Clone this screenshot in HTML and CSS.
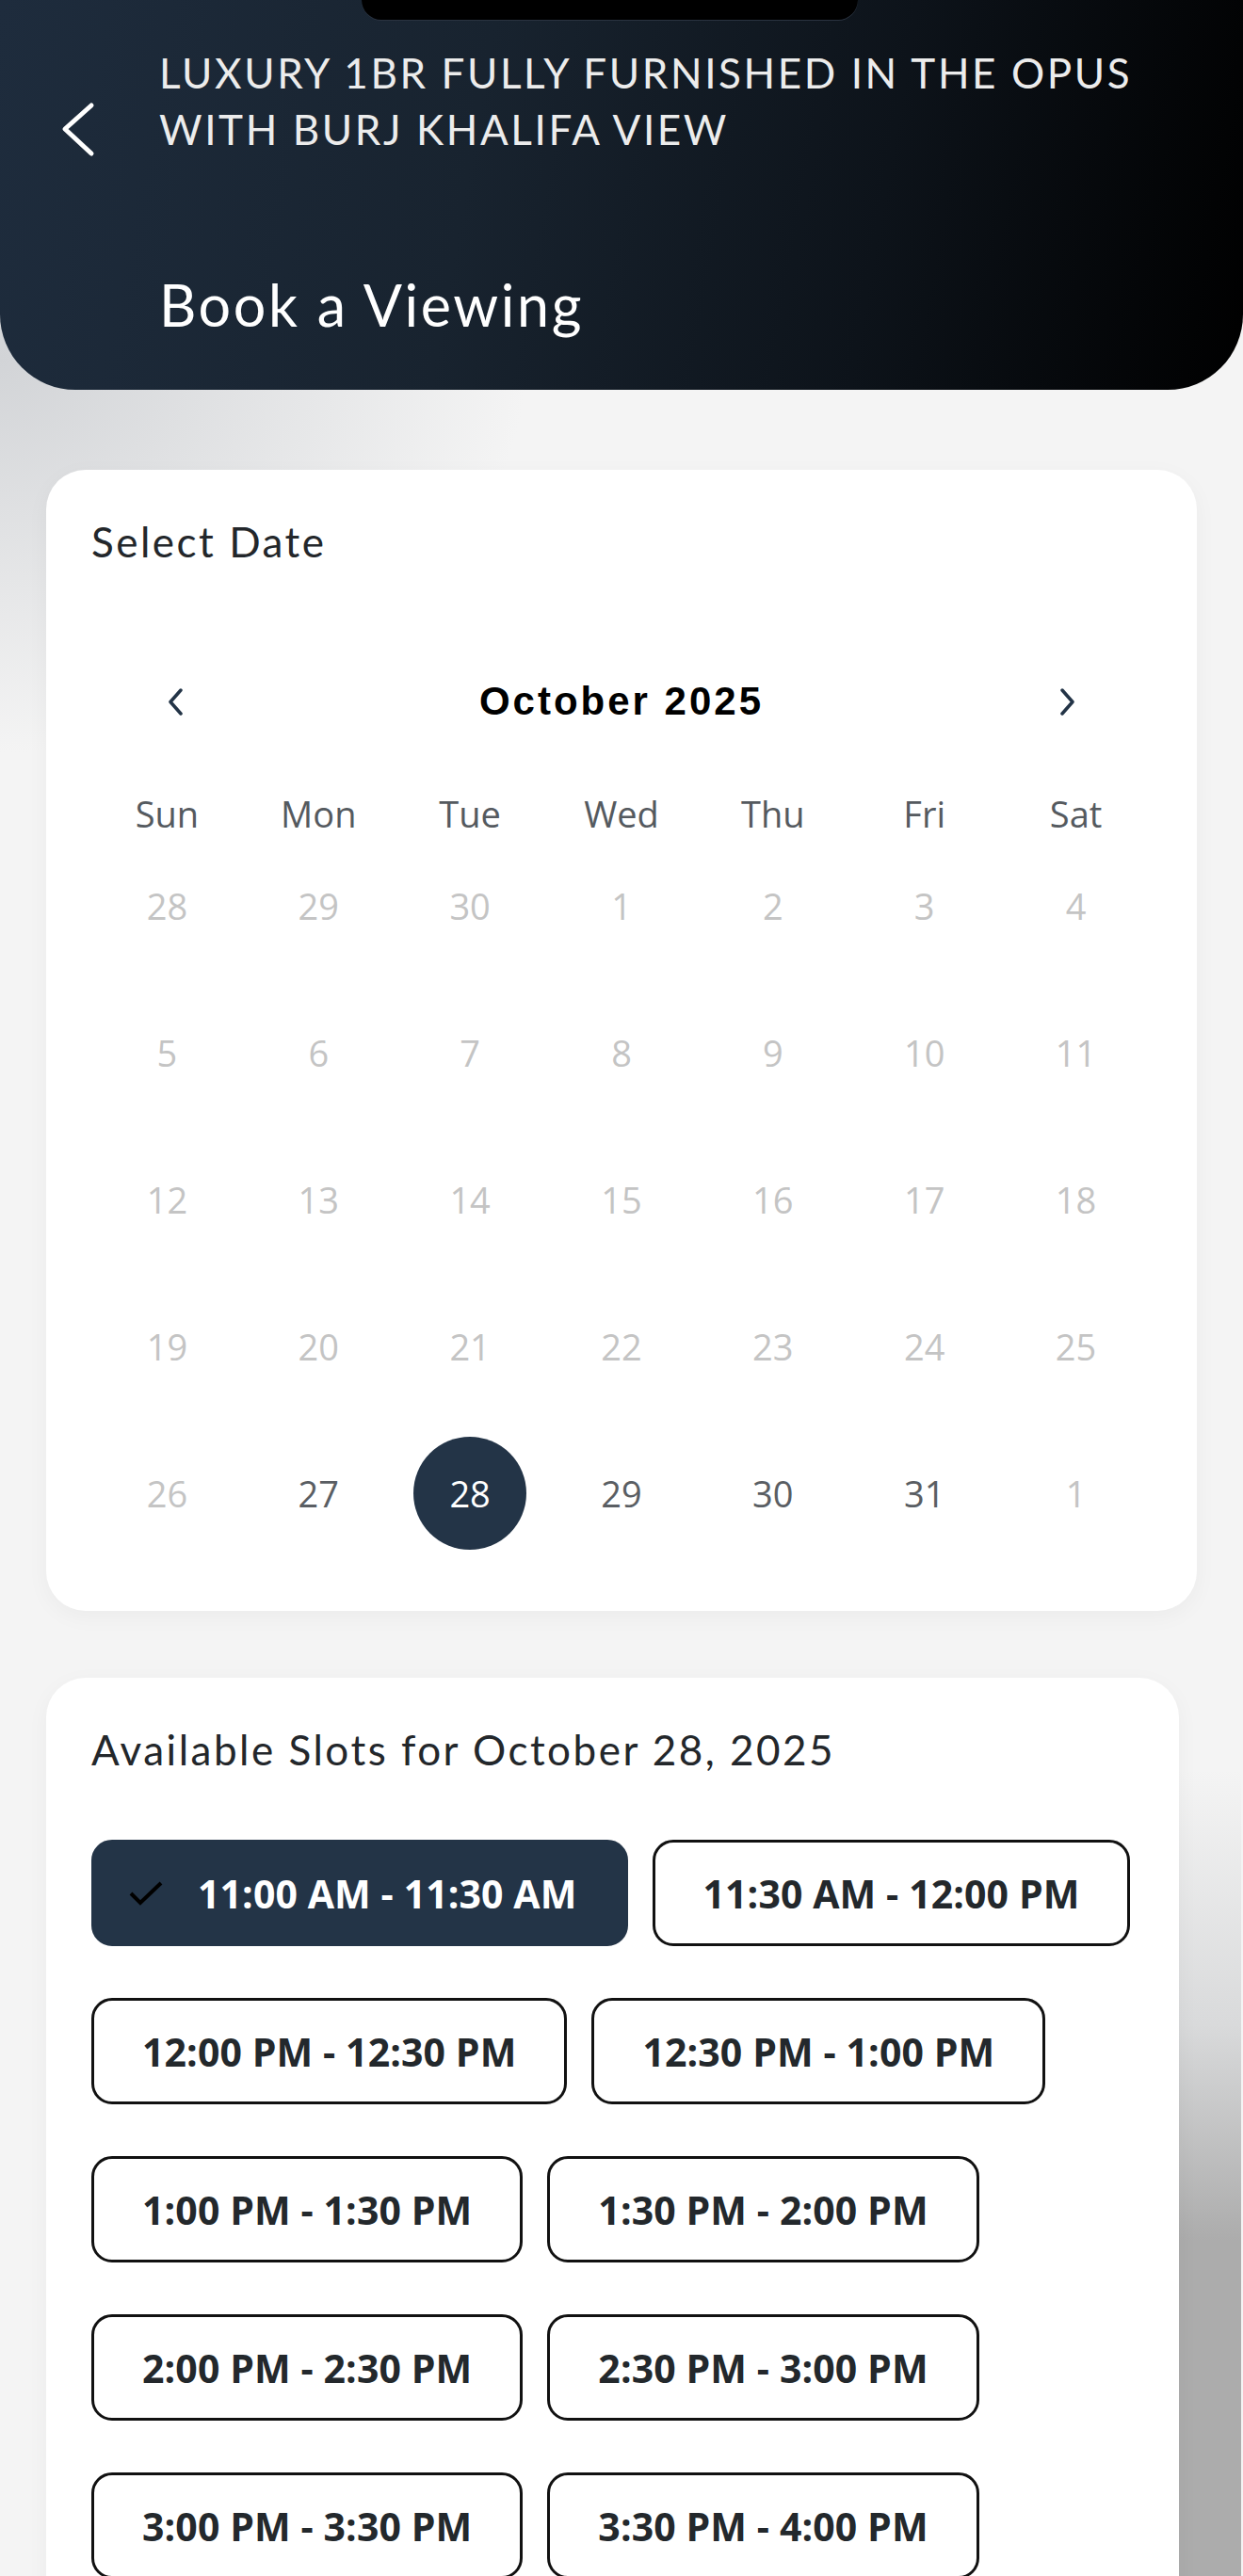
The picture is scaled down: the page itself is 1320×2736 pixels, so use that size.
FILE: index.html
```html
<!DOCTYPE html>
<html>
<head>
    <title>Book a Viewing</title>
    <link rel="stylesheet" href="styles.css">
</head>
<body>

<div class="notch"></div>

<div class="header">
  <div class="header-row">
    <svg class="back" width="40" height="60" viewBox="0 0 40 60">
      <path d="M34 5 L6 30 L34 56" fill="none" stroke="#ffffff" stroke-width="5" stroke-linecap="round" stroke-linejoin="round"/>
    </svg>
    <div class="listing-title">LUXURY 1BR FULLY FURNISHED IN THE OPUS<br>WITH BURJ KHALIFA VIEW</div>
  </div>
  <h1 class="page-title">Book a Viewing</h1>
</div>

<div class="card calendar-card">
  <div class="card-title">Select Date</div>

  <div class="month-row">
    <span class="nav">
      <svg width="18" height="29" viewBox="0 0 18 29"><path d="M15 2 L4 14.5 L15 27" fill="none" stroke="#233447" stroke-width="3.5" stroke-linecap="round" stroke-linejoin="round"/></svg>
    </span>
    <span class="month">October 2025</span>
    <span class="nav">
      <svg width="18" height="29" viewBox="0 0 18 29"><path d="M3 2 L14 14.5 L3 27" fill="none" stroke="#233447" stroke-width="3.5" stroke-linecap="round" stroke-linejoin="round"/></svg>
    </span>
  </div>

  <div class="weekdays">
    <span>Sun</span><span>Mon</span><span>Tue</span><span>Wed</span><span>Thu</span><span>Fri</span><span>Sat</span>
  </div>

  <div class="days">
    <span class="off">28</span><span class="off">29</span><span class="off">30</span><span class="off">1</span><span class="off">2</span><span class="off">3</span><span class="off">4</span>
    <span class="off">5</span><span class="off">6</span><span class="off">7</span><span class="off">8</span><span class="off">9</span><span class="off">10</span><span class="off">11</span>
    <span class="off">12</span><span class="off">13</span><span class="off">14</span><span class="off">15</span><span class="off">16</span><span class="off">17</span><span class="off">18</span>
    <span class="off">19</span><span class="off">20</span><span class="off">21</span><span class="off">22</span><span class="off">23</span><span class="off">24</span><span class="off">25</span>
    <span class="off">26</span><span>27</span><span class="selected"><b>28</b></span><span>29</span><span>30</span><span>31</span><span class="off">1</span>
  </div>
</div>

<div class="card slots-card">
  <div class="card-title">Available Slots for October 28, 2025</div>

  <div class="slots">
    <div class="slot active">
      <svg class="tick" width="36" height="26" viewBox="0 0 36 26"><path d="M2 13 L12 23 L34 2" fill="none" stroke="#000000" stroke-width="4"/></svg>
      11:00 AM - 11:30 AM
    </div>
    <div class="slot">11:30 AM - 12:00 PM</div>
    <div class="slot">12:00 PM - 12:30 PM</div>
    <div class="slot">12:30 PM - 1:00 PM</div>
    <div class="slot">1:00 PM - 1:30 PM</div>
    <div class="slot">1:30 PM - 2:00 PM</div>
    <div class="slot">2:00 PM - 2:30 PM</div>
    <div class="slot">2:30 PM - 3:00 PM</div>
    <div class="slot">3:00 PM - 3:30 PM</div>
    <div class="slot">3:30 PM - 4:00 PM</div>
    <div class="slot">4:00 PM - 4:30 PM</div>
    <div class="slot">4:30 PM - 5:00 PM</div>
  </div>
</div>

</body>
</html>
```

FILE: styles.css
```css
body {
  margin: 0;
  width: 1320px;
  min-height: 2736px;
  font-family: Lato, "Open Sans", sans-serif;
  background-color: #f4f4f4;
  background-image:
    linear-gradient(to bottom, #f4f4f4 0px, #f4f4f4 1880px, #d9dadb 2150px, #acacac 2380px, #acacac 100%),
    radial-gradient(ellipse 560px 420px at 0px 380px, #d2d4d7 0%, rgba(244, 244, 244, 0) 100%);
  background-size: 66px 100%, 100% 100%;
  background-position: 1252px 0, 0 0;
  background-repeat: no-repeat;
  overflow: hidden;
}

.notch {
  position: absolute;
  top: 0;
  left: 384px;
  width: 527px;
  height: 21px;
  background: #000000;
  border-radius: 0 0 26px 26px;
  box-shadow: 0 1px 0 #2a3340;
  z-index: 2;
}

.header {
  height: 414px;
  box-sizing: border-box;
  padding: 47px 0 0 63px;
  border-radius: 0 0 80px 80px;
  background: linear-gradient(100deg, #1e2c3d 0%, #18232f 38%, #0d131a 70%, #000000 100%);
  color: #ffffff;
}

.header-row {
  display: flex;
  align-items: flex-end;
  gap: 66px;
}

.back {
  display: block;
  flex-shrink: 0;
}

.listing-title {
  font-size: 44px;
  line-height: 60px;
  letter-spacing: 2.6px;
  color: #ececec;
}

.page-title {
  margin: 117px 0 0 106px;
  font-size: 61px;
  line-height: 80px;
  font-weight: 400;
  letter-spacing: 2.6px;
}

.card {
  background: #ffffff;
  border-radius: 42px;
  box-sizing: border-box;
  box-shadow: 0 6px 24px rgba(0, 0, 0, 0.04);
}

.calendar-card {
  width: 1222px;
  margin: 85px 0 0 49px;
  padding: 46px 48px 47px 48px;
}

.card-title {
  font-size: 44px;
  line-height: 60px;
  letter-spacing: 2.5px;
  color: #23272b;
}

.month-row {
  margin-top: 100px;
  height: 80px;
  padding: 0 69px;
  display: flex;
  align-items: center;
  justify-content: space-between;
}

.nav {
  width: 40px;
  height: 40px;
  display: flex;
  align-items: center;
  justify-content: center;
}

.month {
  font-family: "Liberation Sans", Arial, sans-serif;
  font-weight: 700;
  font-size: 42px;
  letter-spacing: 3px;
  color: #000000;
}

.weekdays,
.days {
  display: grid;
  grid-template-columns: repeat(7, 1fr);
  font-family: "Open Sans", sans-serif;
  font-size: 38px;
  text-align: center;
}

.weekdays {
  margin-top: 59px;
  height: 40px;
  line-height: 40px;
  color: #555a5f;
}

.days span {
  height: 156px;
  display: flex;
  align-items: center;
  justify-content: center;
  color: #5a5e63;
}

.days .off {
  color: #c4c4c4;
}

.days .selected b {
  width: 120px;
  height: 120px;
  border-radius: 50%;
  background: #233447;
  color: #ffffff;
  font-weight: 400;
  display: flex;
  align-items: center;
  justify-content: center;
}

.slots-card {
  width: 1203px;
  margin: 71px 0 0 49px;
  padding: 46px 24px 60px 48px;
}

.slots {
  margin-top: 66px;
  display: flex;
  flex-wrap: wrap;
  column-gap: 26px;
  row-gap: 55px;
}

.slot {
  height: 113px;
  box-sizing: border-box;
  padding: 0 51px;
  border: 3px solid #111111;
  border-radius: 22px;
  display: flex;
  align-items: center;
  font-family: "Open Sans", sans-serif;
  font-weight: 700;
  font-size: 41px;
  letter-spacing: 0.1px;
  color: #23282c;
}

.slot.active {
  background: #233447;
  border-color: #233447;
  color: #ffffff;
  padding-left: 37px;
}

.tick {
  margin-right: 37px;
}
```
